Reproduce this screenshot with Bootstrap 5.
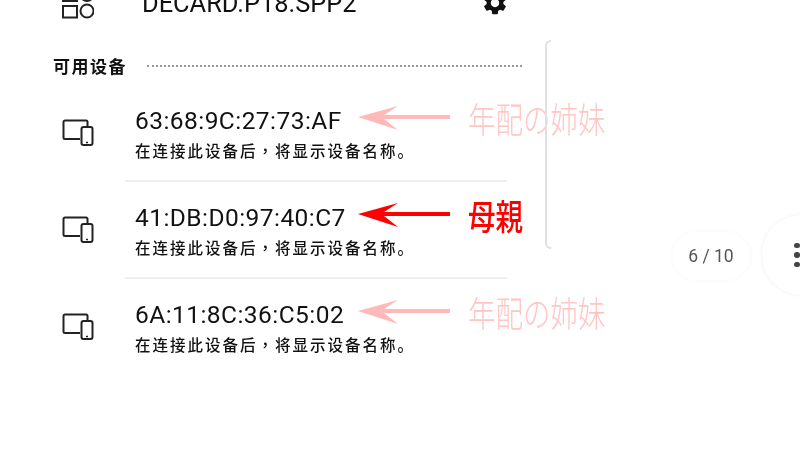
<!doctype html>
<html lang="en">
<head>
    <meta charset="utf-8">
    <meta name="viewport" content="width=device-width, initial-scale=1">
    <title>可用设备</title>
    <link href="https://cdn.jsdelivr.net/npm/bootstrap@5.3.0/dist/css/bootstrap.min.css" rel="stylesheet">
    <style>
        html, body { height: 449px; overflow: hidden; background: #fff; }
        .stage { position: relative; width: 800px; height: 449px; overflow: hidden; color: #111;
            font-family: Roboto, "Noto Sans CJK SC", sans-serif; filter: blur(.4px); }
        .paired-row { margin-top: -9px; height: 30px; padding-left: 62px; }
        .paired-name { margin-left: 48px; margin-top: -3px; width: 339px; font-size: 25.4px; line-height: 30px; white-space: nowrap; }
        .paired-gear { margin-top: -2px; }
        .section-head { margin-top: 26px; padding-left: 53px; height: 38px; width: 522px; }
        .section-title { font-size: 17px; font-weight: 700; letter-spacing: 1.5px; line-height: 38px; font-family: "Noto Sans CJK SC", sans-serif; }
        .section-dots { flex: 1; margin-left: 20px; border-top: 2px dotted #999; }
        .dev-row { padding-left: 62px; height: 97px; }
        .dev-icon { width: 63px; padding-top: 34px; }
        .dev-body { width: 382px; padding-left: 10px; padding-top: 23px; border-bottom: 2px solid #efefef; }
        .dev-row:last-child .dev-body { border-bottom: 0; }
        .dev-mac { font-size: 24.5px; line-height: 26px; letter-spacing: .45px; width: 223px; white-space: nowrap; }
        .dev-hint { font-size: 15.5px; font-weight: 500; line-height: 20px; margin-top: 6px; letter-spacing: 2px; white-space: nowrap; font-family: "Noto Sans CJK SC", sans-serif; width: 223px; }
        .hint-comma { font-family: "Noto Sans CJK TC", sans-serif; }
        .note-arrow { margin-top: -2px; flex-shrink: 0; }
        .note-label { margin-left: 18px; margin-top: -11px; font-size: 27.5px; line-height: 40px; height: 40px; white-space: nowrap; flex-shrink: 0;
            font-family: "Noto Sans CJK JP", sans-serif; transform: scaleY(1.3); }
        .note-soft { color: #ffc6c6; font-weight: 300; }
        .note-strong { color: #f00; font-weight: 500; }
        .side-bracket { position: absolute; left: 545px; top: 40px; width: 6px; height: 209px; border: 2px solid #e0e0e0;
            border-right: 0; border-radius: 6px 0 0 6px; }
        .page-pill { position: absolute; left: 672px; top: 232px; width: 78px; height: 48px; border-radius: 24px; color: #555;
            font-size: 17.5px; background: #fff; box-shadow: 0 0 4px rgba(0,0,0,.04); }
        .more-btn { position: absolute; left: 762px; top: 215px; width: 80px; height: 80px; border-radius: 50%; background: #fff;
            box-shadow: 0 0 4px rgba(0,0,0,.07); padding-left: 32px; }
        .more-dot { width: 5.500px; height: 5.500px; border-radius: 50%; background: #444; }
    </style>
</head>
<body>
<div class="stage">
    <svg width="0" height="0" class="position-absolute">
        <symbol id="devices" viewBox="0 0 32 28">
            <path d="M18 20H3a1.500 1.500 0 0 1-1.500-1.500V3A1.500 1.500 0 0 1 3 1.500h21A1.500 1.500 0 0 1 25.500 3v4" fill="none" stroke="#222" stroke-width="2"/>
            <rect x="19.500" y="8" width="11" height="18" rx="2" fill="none" stroke="#222" stroke-width="2"/>
            <path d="M24 23.500h2" stroke="#222" stroke-width="1.500"/>
        </symbol>
    </svg>

    <div class="paired-row d-flex">
        <svg width="32" height="28" viewBox="0 0 32 28" class="flex-shrink-0">
            <rect x="1" y="0" width="14" height="10" fill="none" stroke="#222" stroke-width="2"/>
            <circle cx="25" cy="3.500" r="6.500" fill="none" stroke="#222" stroke-width="2"/>
            <rect x="1" y="15" width="14" height="11.500" fill="none" stroke="#222" stroke-width="2"/>
            <circle cx="25" cy="20" r="6.500" fill="none" stroke="#222" stroke-width="2"/>
        </svg>
        <div class="paired-name">DECARD.P18.SPP2</div>
        <svg class="paired-gear flex-shrink-0" width="28" height="28" viewBox="0 0 24 24">
            <path fill="#111" d="M19.140 12.940c.04-.3.06-.61.06-.94 0-.32-.02-.64-.07-.94l2.030-1.580a.49.49 0 0 0 .12-.61l-1.920-3.320a.488.488 0 0 0-.59-.22l-2.390.96c-.5-.38-1.030-.7-1.620-.94l-.36-2.540a.484.484 0 0 0-.48-.41h-3.840c-.24 0-.43.17-.47.41l-.36 2.540c-.59.24-1.130.57-1.620.94l-2.390-.96c-.22-.08-.47 0-.59.22L2.740 8.870c-.12.21-.08.47.12.61l2.030 1.580c-.05.3-.09.63-.09.94s.02.64.07.94l-2.030 1.580a.49.49 0 0 0-.12.61l1.920 3.320c.12.22.37.29.59.22l2.390-.96c.5.38 1.030.7 1.620.94l.36 2.540c.05.24.24.41.48.41h3.840c.24 0 .44-.17.47-.41l.36-2.540c.59-.24 1.130-.56 1.620-.94l2.390.96c.22.08.47 0 .59-.22l1.920-3.320c.12-.22.07-.47-.12-.61l-2.010-1.580zM12 15.600c-1.980 0-3.600-1.620-3.600-3.600s1.620-3.600 3.600-3.600 3.600 1.620 3.600 3.600-1.620 3.600-3.600 3.600z"/>
        </svg>
    </div>

    <div class="section-head d-flex align-items-center">
        <div class="section-title">可用设备</div>
        <div class="section-dots"></div>
    </div>

    <div id="devices-list"></div>

    <div class="side-bracket"></div>
    <div class="page-pill d-flex align-items-center justify-content-center">6 / 10</div>
    <div class="more-btn d-flex flex-column justify-content-center gap-1">
        <div class="more-dot"></div>
        <div class="more-dot"></div>
        <div class="more-dot"></div>
    </div>
</div>

<script>
    // Rows are the same apart from the address and the note beside it
    const rows = [
        { mac: '63:68:9C:27:73:AF', note: '年配の姉妹', soft: true },
        { mac: '41:DB:D0:97:40:C7', note: '母親', soft: false },
        { mac: '6A:11:8C:36:C5:02', note: '年配の姉妹', soft: true }
    ];
    document.getElementById('devices-list').innerHTML = rows.map(r => {
        const colour = r.soft ? '#ffb9b9' : '#f00';
        return `<div class="dev-row d-flex">
            <div class="dev-icon flex-shrink-0"><svg width="32" height="28"><use href="#devices"/></svg></div>
            <div class="dev-body flex-shrink-0 d-flex">
                <div>
                    <div class="dev-mac">${r.mac}</div>
                    <div class="dev-hint">在连接此设备后<span class="hint-comma">，</span>将显示设备名称。</div>
                </div>
                <svg class="note-arrow" width="92" height="26" viewBox="0 0 92 26">
                    <path fill="${colour}" d="M0 11 40 0 26 9H92V13H26L40 24Z"/>
                </svg>
                <div class="note-label ${r.soft ? 'note-soft' : 'note-strong'}">${r.note}</div>
            </div>
        </div>`;
    }).join('');
</script>
<script src="https://cdn.jsdelivr.net/npm/bootstrap@5.3.0/dist/js/bootstrap.bundle.min.js"></script>
</body>
</html>
